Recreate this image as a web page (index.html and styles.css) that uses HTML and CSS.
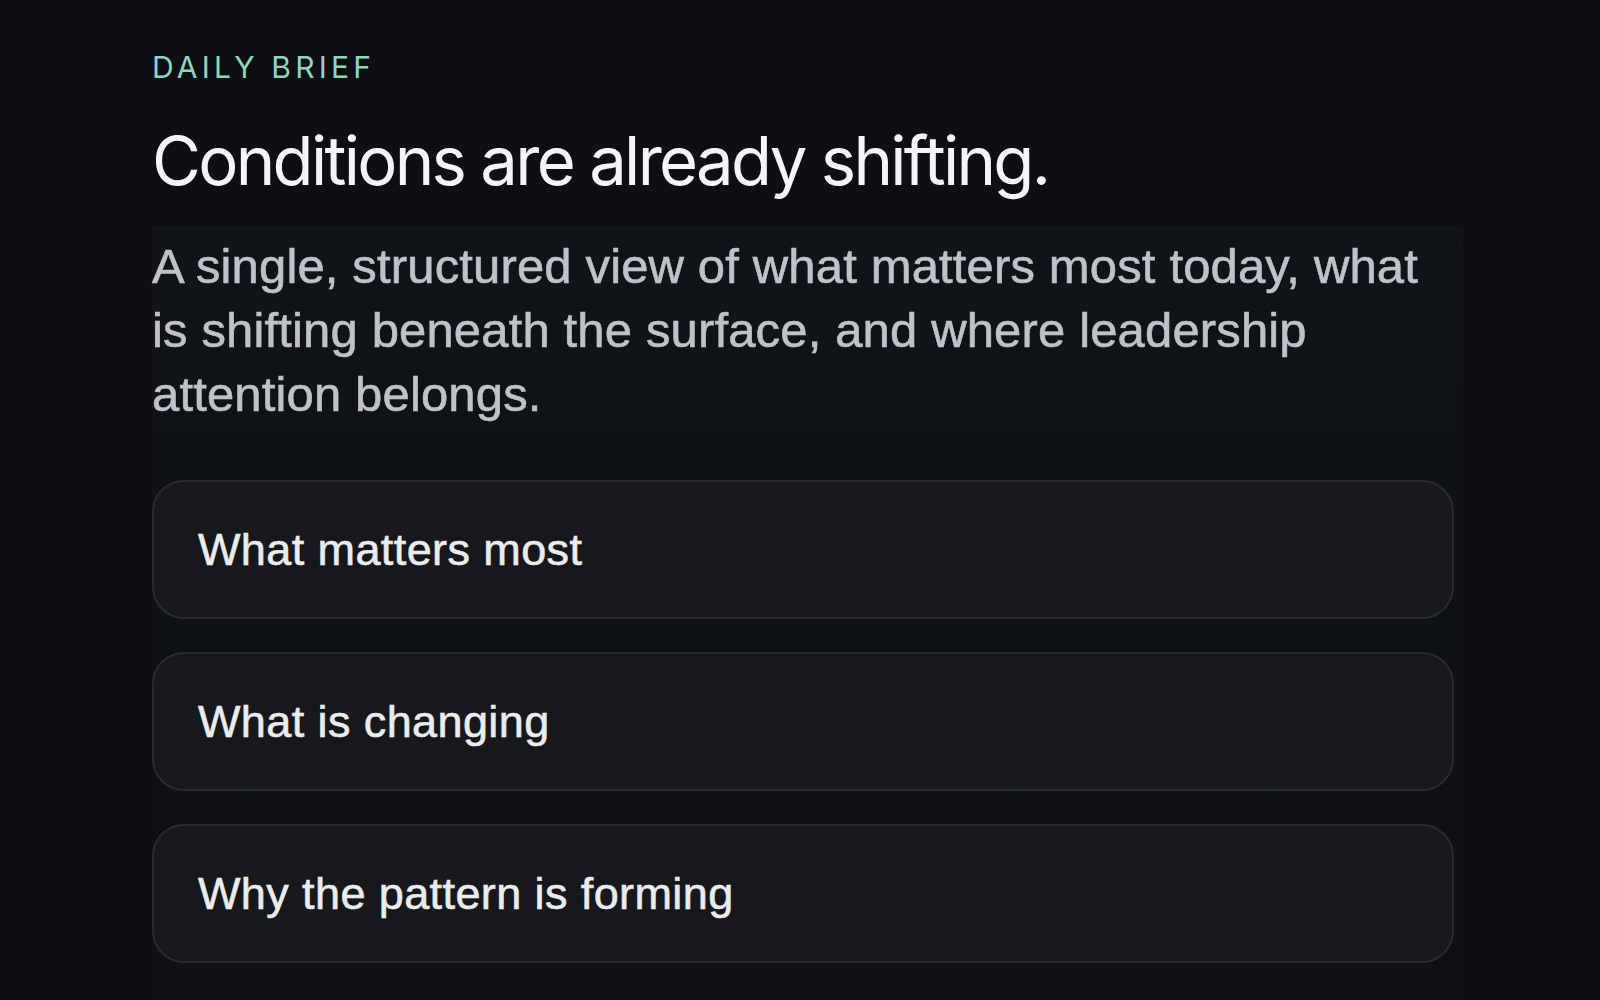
FILE: index.html
```html
<!DOCTYPE html>
<html lang="en">
<head>
<meta charset="utf-8">
<title>Daily Brief</title>
<link rel="stylesheet" href="styles.css">
</head>
<body>
<main class="brief">
  <p class="eyebrow">DAILY BRIEF</p>
  <h1 class="title">Conditions are already shifting.</h1>
  <section class="panel">
    <p class="lead">A single, structured view of what matters most today, what is shifting beneath the surface, and where leadership attention belongs.</p>
    <ul class="cards">
      <li class="card">What matters most</li>
      <li class="card">What is changing</li>
      <li class="card">Why the pattern is forming</li>
    </ul>
  </section>
</main>
</body>
</html>
```
FILE: styles.css
```css
html, body {
  margin: 0;
  padding: 0;
  background: #0d0f13;
  height: 100%;
  overflow: hidden;
}
.brief {
  padding: 52px 0 0 152px;
  width: 1311px;
  font-family: Inter, "Liberation Sans", sans-serif;
}
.eyebrow {
  margin: 0;
  font-family: Inter, sans-serif;
  font-size: 30px;
  line-height: 30px;
  letter-spacing: 4.2px;
  color: #8fd6bd;
  font-weight: 400;
}
.title {
  margin: 44px 0 0 0;
  font-family: Inter, sans-serif;
  font-weight: 400;
  font-size: 67px;
  line-height: 70px;
  letter-spacing: -2.7px;
  color: #f4f5f7;
}
.panel {
  margin-top: 30px;
  padding-top: 8px;
  padding-bottom: 40px;
  background: linear-gradient(180deg, rgba(120,140,200,0.035) 0%, rgba(120,140,200,0.015) 40%, rgba(120,140,200,0.008) 100%);
}
.lead {
  margin: 0;
  font-family: "Liberation Sans", Arial, sans-serif;
  font-size: 49px;
  line-height: 64px;
  color: #bfc2c8;
  -webkit-text-stroke: 0.6px #bfc2c8;
  letter-spacing: 0.15px;
  max-width: 1290px;
}
.cards {
  list-style: none;
  margin: 54px 0 0 0;
  padding: 0;
  display: flex;
  flex-direction: column;
  gap: 33px;
  width: 1302px;
}
.card {
  height: 139px;
  box-sizing: border-box;
  display: flex;
  align-items: center;
  padding: 0 44px;
  border: 2px solid #272a2f;
  border-radius: 32px;
  background: #16181c;
  font-family: "Liberation Sans", Arial, sans-serif;
  font-size: 45px;
  color: #ebecee;
  -webkit-text-stroke: 0.6px #ebecee;
  letter-spacing: 0.4px;
}
```
